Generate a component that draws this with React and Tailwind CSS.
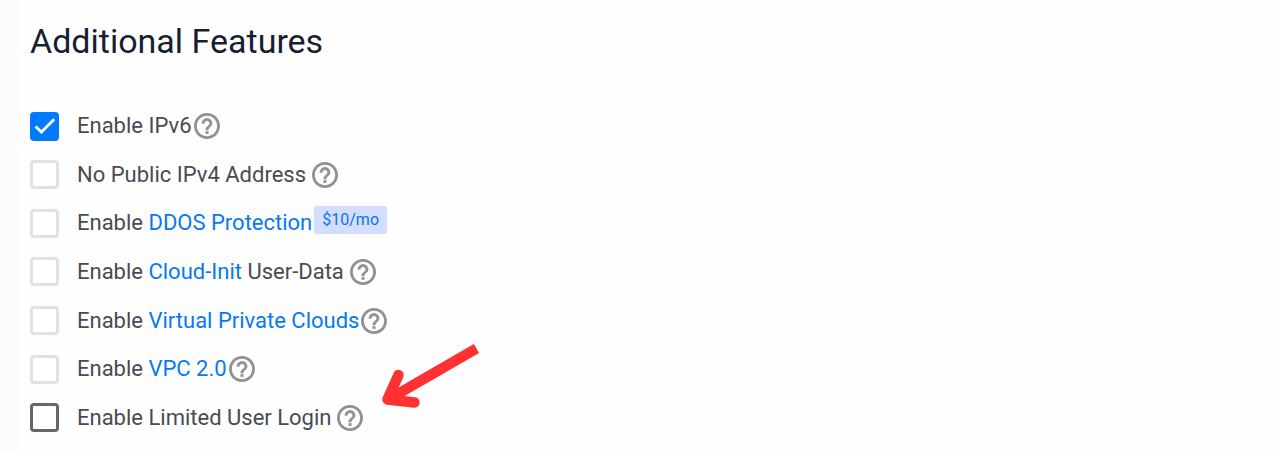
import { useState } from "react";

function HelpIcon() {
  return (
    <svg viewBox="2 2 20 20" className="size-[26px] fill-[#8f9193]" aria-hidden="true">
      <path d="M12 2C6.48 2 2 6.48 2 12s4.48 10 10 10 10-4.48 10-10S17.52 2 12 2zm0 17.8c-4.3 0-7.8-3.5-7.8-7.8s3.5-7.8 7.8-7.8 7.8 3.5 7.8 7.8-3.5 7.8-7.8 7.8z" />
      <path
        d="M11 18h2v-2h-2v2zm1-12c-2.21 0-4 1.79-4 4h2c0-1.1.9-2 2-2s2 .9 2 2c0 2-3 1.75-3 5h2c0-2.25 3-2.5 3-5 0-2.21-1.79-4-4-4z"
        className="stroke-[#8f9193] stroke-[0.3]"
      />
    </svg>
  );
}

function HelpButton({ topic, wide }) {
  return (
    <button
      type="button"
      aria-label={`Help: ${topic}`}
      className={`shrink-0 rounded-full ${wide ? "ml-1.5" : "ml-0.5"}`}
    >
      <HelpIcon />
    </button>
  );
}

const features = [
  { id: "ipv6", before: "Enable IPv6", help: "near" },
  { id: "no-ipv4", before: "No Public IPv4 Address", help: "wide" },
  { id: "ddos", before: "Enable ", link: "DDOS Protection", price: "$10/mo" },
  { id: "cloud-init", before: "Enable ", link: "Cloud-Init", after: " User-Data", help: "wide" },
  { id: "vpc", before: "Enable ", link: "Virtual Private Clouds", help: "near" },
  { id: "vpc2", before: "Enable ", link: "VPC 2.0", help: "near" },
  { id: "limited-user", before: "Enable Limited User Login", help: "wide", strong: true },
];

function Feature({ item, checked, onChange }) {
  const name = `${item.before}${item.link ?? ""}${item.after ?? ""}`;
  return (
    <li className="flex items-center">
      <span className="grid size-[29px] shrink-0 place-items-center">
        <input
          id={item.id}
          type="checkbox"
          checked={checked}
          onChange={onChange}
          className={`col-start-1 row-start-1 size-[29px] cursor-pointer appearance-none rounded-[4px] bg-white checked:border-[#007bff] checked:bg-[#007bff] ${
            item.strong ? "border-[3px] border-[#67676a]" : "border-[3px] border-[#e2e2e2]"
          }`}
        />
        {checked && (
          <svg
            viewBox="0 0 28 28"
            className="pointer-events-none col-start-1 row-start-1 size-7 fill-none stroke-white stroke-[2.8]"
            aria-hidden="true"
          >
            <path d="M4.6 14.4 10.4 20 23.2 7.2" />
          </svg>
        )}
      </span>
      <label htmlFor={item.id} className="ml-[18px] whitespace-pre">
        {item.before}
        {item.link && (
          <a href="#" className="text-[#0878f4]">
            {item.link}
          </a>
        )}
        {item.after}
      </label>
      {item.help && <HelpButton topic={name} wide={item.help === "wide"} />}
      {item.price && (
        <span className="mb-1.5 ml-0.5 rounded-[3px] bg-[#d2defb] px-2 text-base leading-7 text-[#0c73ea]">
          {item.price}
        </span>
      )}
    </li>
  );
}

export default function App() {
  const [enabled, setEnabled] = useState({ ipv6: true });
  return (
    <main className="min-h-screen bg-[#fefefe] bg-linear-to-r from-[#fafafa] to-[#fefefe] to-[24px] px-[30px] pt-5 font-['Roboto',sans-serif] text-[22px] leading-7 text-[#494b50]">
      <h1 className="text-[34px] leading-[42px] text-[#171e31]">Additional Features</h1>
      <div className="relative mt-10">
        <ul className="grid min-h-[340px] auto-rows-fr">
          {features.map((item) => (
            <Feature
              key={item.id}
              item={item}
              checked={!!enabled[item.id]}
              onChange={(e) => setEnabled({ ...enabled, [item.id]: e.target.checked })}
            />
          ))}
        </ul>
        <svg
          viewBox="0 0 100 68"
          className="pointer-events-none absolute bottom-[31px] left-[350px] h-[68px] w-[100px] fill-none stroke-[#ff3131]"
          aria-hidden="true"
        >
          <path d="M96.5 5.5 9 56" strokeWidth="10.5" />
          <path d="M18.5 32 7.5 56.5 34.5 59.5" strokeWidth="10.5" strokeLinecap="round" strokeLinejoin="round" />
        </svg>
      </div>
    </main>
  );
}
